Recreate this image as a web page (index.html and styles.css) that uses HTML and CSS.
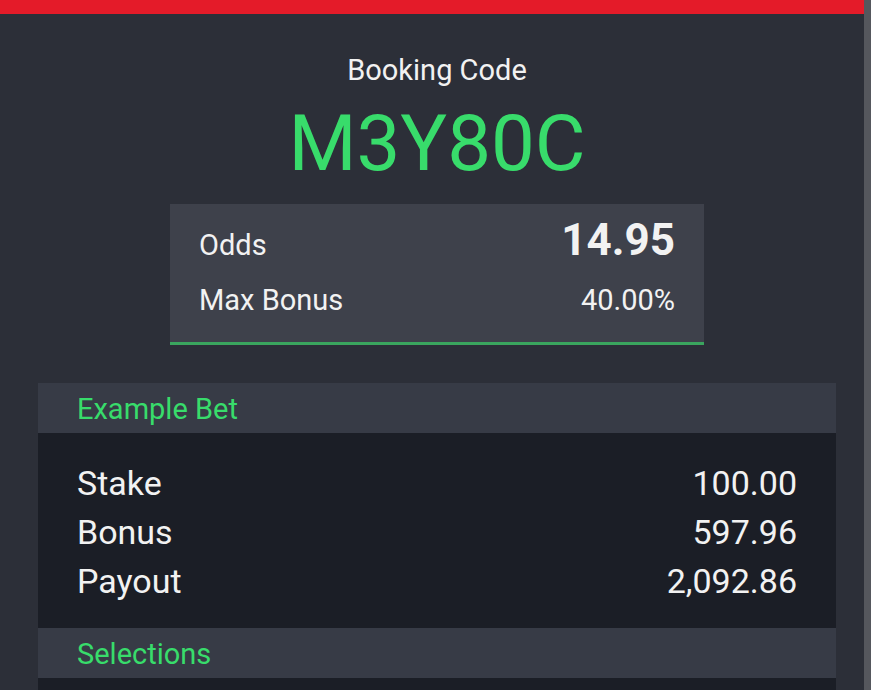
FILE: index.html
```html
<!DOCTYPE html>
<html lang="en">
<head>
<meta charset="UTF-8">
<meta name="viewport" content="width=device-width, initial-scale=1.0">
<title>Booking Code</title>
<link rel="stylesheet" href="styles.css">
</head>
<body>
<div class="topbar"></div>

<div class="page">
    <div class="code-block">
        <div class="code-label">Booking Code</div>
        <div class="code-value">M3Y80C</div>
    </div>

    <div class="summary">
        <div class="summary-row">
            <span>Odds</span>
            <span class="odds-value">14.95</span>
        </div>
        <div class="summary-row">
            <span>Max Bonus</span>
            <span>40.00%</span>
        </div>
    </div>

    <div class="section">
        <div class="section-head">Example Bet</div>
        <div class="section-body">
            <div class="bet-row"><span>Stake</span><span>100.00</span></div>
            <div class="bet-row"><span>Bonus</span><span>597.96</span></div>
            <div class="bet-row"><span>Payout</span><span>2,092.86</span></div>
        </div>
    </div>

    <div class="section">
        <div class="section-head">Selections</div>
        <div class="section-body empty"></div>
    </div>
</div>

<div class="scrollbar"></div>
</body>
</html>
```

FILE: styles.css
```css
html, body {
  margin: 0;
  padding: 0;
  height: 100%;
  overflow: hidden;
}
body {
  font-family: 'Roboto', 'Liberation Sans', sans-serif;
  background-color: #2c2f38;
  color: #f2f2f2;
}
.topbar {
  height: 14px;
  background-color: #e41b29;
}
.page {
  padding: 0 35px 0 38px;
}
.scrollbar {
  position: fixed;
  top: 0;
  right: 0;
  width: 7px;
  height: 100%;
  background-color: #55575d;
}
.code-block {
  text-align: center;
  padding-top: 40px;
}
.code-label {
  font-size: 29px;
  line-height: 32px;
}
.code-value {
  font-size: 78px;
  line-height: 90px;
  color: #38dc6b;
  margin-top: 13px;
}
.summary {
  width: 534px;
  margin: 15px auto 0;
  background-color: #3e414b;
  border-bottom: 3px solid #3aa55e;
  box-sizing: border-box;
  height: 141px;
  padding: 14px 29px 0 29px;
  font-size: 29px;
  line-height: 1;
}
.summary-row {
  display: flex;
  justify-content: space-between;
  align-items: baseline;
}
.summary-row + .summary-row {
  margin-top: 24px;
}
.odds-value {
  font-size: 44px;
  font-weight: bold;
}
.summary + .section {
  margin-top: 38px;
}
.section-head {
  background-color: #373b46;
  color: #38dc6b;
  font-size: 29px;
  height: 50px;
  line-height: 52px;
  padding-left: 39px;
}
.section-body {
  background-color: #1b1e26;
  padding: 26px 39px 22px 39px;
}
.section-body.empty {
  height: 40px;
  padding: 0;
}
.bet-row {
  display: flex;
  justify-content: space-between;
  font-size: 34px;
  line-height: 49px;
}
```
